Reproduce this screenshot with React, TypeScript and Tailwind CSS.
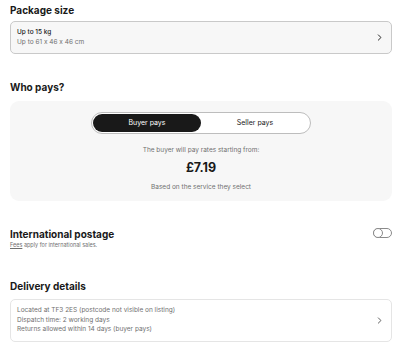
import { useState } from "react";

function Chevron({ className }: { className?: string }) {
  return (
    <svg viewBox="0 0 8 12" className={className} fill="none">
      <path d="M2 1.5 6.5 6 2 10.5" stroke="currentColor" strokeWidth="1.6" strokeLinecap="round" strokeLinejoin="round" />
    </svg>
  );
}

function Heading({ children }: { children: React.ReactNode }) {
  return <h2 className="text-[10px] font-bold leading-[12px] text-[#191919]">{children}</h2>;
}

export default function App() {
  const [payer, setPayer] = useState<"buyer" | "seller">("buyer");
  const [intl, setIntl] = useState(false);

  return (
    <div
      className="h-[357px] w-[400px] overflow-hidden bg-white px-[10px] pt-[4px] text-[#191919] [font-feature-settings:'calt'_0]"
      style={{ fontFamily: "Inter, 'Noto Sans', sans-serif" }}
    >
      {/* Package size */}
      <Heading>Package size</Heading>
      <button
        type="button"
        className="mt-[5px] flex h-[33px] w-[382px] items-center justify-between rounded-[5px] border border-[#c9c9c9] bg-[#f7f7f7] pl-[6px] pr-[9px] text-left"
      >
        <div className="leading-[9.5px]">
          <p className="text-[6.5px] font-medium text-[#191919]">Up to 15 kg</p>
          <p className="text-[6.5px] text-[#707070]">Up to 61 x 46 x 46 cm</p>
        </div>
        <Chevron className="h-[7px] w-[5px] text-[#191919]" />
      </button>

      {/* Who pays */}
      <div className="mt-[27px]">
        <Heading>Who pays?</Heading>
      </div>
      <div className="mt-[8px] flex h-[100px] w-[382px] flex-col items-center rounded-[9px] bg-[#f7f7f7] pt-[11px]">
        <div className="flex h-[22px] w-[220px] rounded-full border border-[#bdbdbd] bg-white p-[1px]">
          <button
            type="button"
            onClick={() => setPayer("buyer")}
            className={
              payer === "buyer"
                ? "flex-1 rounded-full bg-[#191919] text-[7px] text-white"
                : "flex-1 rounded-full text-[7px] text-[#191919]"
            }
          >
            Buyer pays
          </button>
          <button
            type="button"
            onClick={() => setPayer("seller")}
            className={
              payer === "seller"
                ? "flex-1 rounded-full bg-[#191919] text-[7px] text-white"
                : "flex-1 rounded-full text-[7px] text-[#191919]"
            }
          >
            Seller pays
          </button>
        </div>
        <p className="mt-[12px] text-[6.5px] leading-[8px] text-[#707070]">
          The {payer} will pay rates starting from:
        </p>
        <p className="mt-[7px] text-[12.5px] font-bold leading-[14px] text-[#191919]">£7.19</p>
        <p className="mt-[8px] text-[6.5px] leading-[8px] text-[#707070]">Based on the service they select</p>
      </div>

      {/* International postage */}
      <div className="mt-[27px] flex w-[382px] items-start justify-between">
        <div>
          <Heading>International postage</Heading>
          <p className="mt-[2px] text-[5.5px] leading-[6px] text-[#707070]">
            <span className="underline">Fees</span> apply for international sales.
          </p>
        </div>
        <button
          type="button"
          onClick={() => setIntl(!intl)}
          className="flex h-[10px] w-[19px] items-center rounded-full border border-[#8a8a8a] bg-white"
        >
          <span
            className={
              intl
                ? "ml-auto h-[10px] w-[10px] rounded-full border border-[#8a8a8a] bg-white"
                : "-ml-px h-[10px] w-[10px] rounded-full border border-[#8a8a8a] bg-white"
            }
          />
        </button>
      </div>

      {/* Delivery details */}
      <div className="mt-[32px]">
        <Heading>Delivery details</Heading>
      </div>
      <button
        type="button"
        className="mt-[7px] flex h-[43px] w-[382px] items-center justify-between rounded-[5px] border border-[#e5e5e5] bg-white pl-[6px] pr-[9px] text-left"
      >
        <div className="text-[6.5px] leading-[9.5px] text-[#707070]">
          <p>Located at TF3 2ES (postcode not visible on listing)</p>
          <p>Dispatch time: 2 working days</p>
          <p>Returns allowed within 14 days (buyer pays)</p>
        </div>
        <Chevron className="h-[7px] w-[5px] text-[#555555]" />
      </button>
    </div>
  );
}
